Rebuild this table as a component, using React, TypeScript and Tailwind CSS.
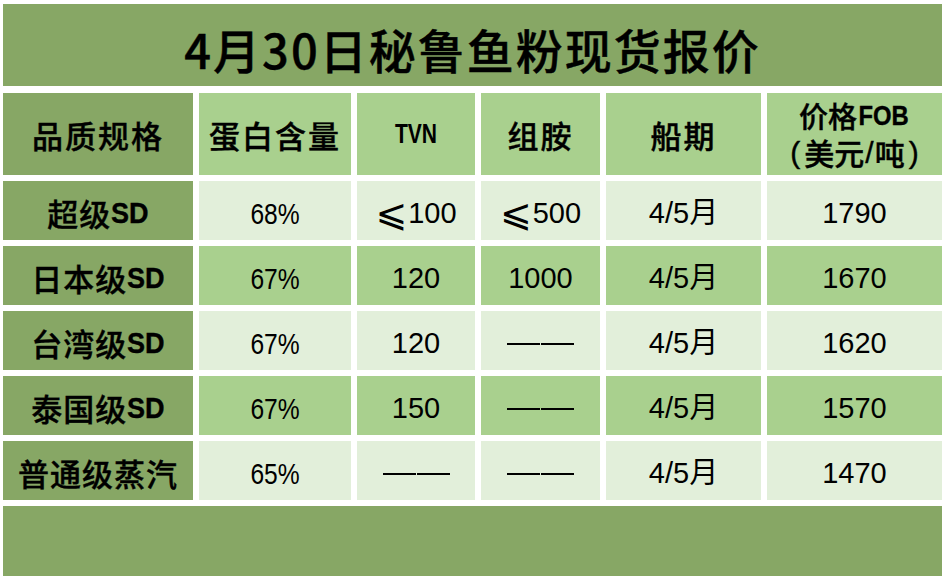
import React from "react";

const CJK = "font-['Noto_Sans_CJK_SC',sans-serif] [-webkit-text-stroke:0.4px_black]";
const ARIAL = "font-['Liberation_Sans','Noto_Sans_CJK_SC',sans-serif]";

const DARK = "bg-[#87a765]";
const MID = "bg-[#a9d08e]";
const LIGHT = "bg-[#e2efda]";

type Row = { name: string; protein: string; tvn: string; his: string; ship: string; price: string };

const rows: Row[] = [
  { name: "超级SD", protein: "68%", tvn: "⩽100", his: "⩽500", ship: "4/5月", price: "1790" },
  { name: "日本级SD", protein: "67%", tvn: "120", his: "1000", ship: "4/5月", price: "1670" },
  { name: "台湾级SD", protein: "67%", tvn: "120", his: "——", ship: "4/5月", price: "1620" },
  { name: "泰国级SD", protein: "67%", tvn: "150", his: "——", ship: "4/5月", price: "1570" },
  { name: "普通级蒸汽", protein: "65%", tvn: "——", his: "——", ship: "4/5月", price: "1470" },
];

function Val({ v }: { v: string }) {
  if (v === "——") {
    return (
      <span className="flex items-center gap-[1px]">
        <span className="block w-[33px] h-[2px] bg-black" />
        <span className="block w-[33px] h-[2px] bg-black" />
      </span>
    );
  }
  if (v.startsWith("⩽")) {
    return (
      <span className={`${ARIAL} text-[29px] text-black leading-none flex items-center`}>
        <span className="font-['DejaVu_Sans',sans-serif] text-[38px] leading-none mr-[1px] -mt-[2px]">⩽</span>
        {v.slice(1)}
      </span>
    );
  }
  return <span className={`${ARIAL} text-[29px] text-black leading-none`}>{v}</span>;
}

export default function App() {
  return (
    <div className="w-[945px] h-[580px] bg-white pt-[4px] px-[3px] flex flex-col">
      <div className={`${DARK} h-[82px] flex items-center justify-center pt-[6px]`}>
        <span className={`${CJK} font-medium text-[47px] text-black leading-none tracking-[2px]`}>
          4月30日秘鲁鱼粉现货报价
        </span>
      </div>
      <div className="mt-[7px] grid grid-cols-[190px_152px_118px_119px_155px_175px] gap-[6px] grid-rows-[82px_59px_59px_59px_59px_59px_70px]">
        <div className={`${DARK} flex items-center justify-center`}>
          <span className={`${CJK} font-medium text-[31px] tracking-[2px] leading-none`}>品质规格</span>
        </div>
        <div className={`${MID} flex items-center justify-center`}>
          <span className={`${CJK} font-medium text-[31px] tracking-[2px] leading-none`}>蛋白含量</span>
        </div>
        <div className={`${MID} flex items-center justify-center`}>
          <span className={`${ARIAL} font-bold text-[27px] leading-none inline-block scale-x-[0.78]`}>TVN</span>
        </div>
        <div className={`${MID} flex items-center justify-center`}>
          <span className={`${CJK} font-medium text-[31px] tracking-[2px] leading-none`}>组胺</span>
        </div>
        <div className={`${MID} flex items-center justify-center`}>
          <span className={`${CJK} font-medium text-[31px] tracking-[2px] leading-none`}>船期</span>
        </div>
        <div className={`${MID} flex flex-col items-center justify-center`}>
          <span className={`${CJK} font-medium text-[29px] leading-[37px] flex items-center`}>
            价格<span className={`${ARIAL} font-bold text-[28px] inline-block scale-x-[0.85] -mx-[3px]`}>FOB</span>
          </span>
          <span className={`${CJK} font-medium text-[30px] leading-[37px] flex items-center`}>
            <span className={`${ARIAL} mr-[4px]`}>(</span>美元<span className={`${ARIAL} mx-[1px]`}>/</span>吨<span className={`${ARIAL} ml-[4px]`}>)</span>
          </span>
        </div>
        {rows.map((r, i) => {
          const bg = i % 2 === 0 ? LIGHT : MID;
          const hasSD = r.name.includes("SD");
          return (
            <React.Fragment key={r.name}>
              <div className={`${DARK} flex items-center justify-center pt-[4px]`}>
                <span className={`${CJK} font-medium text-[31px] tracking-[1px] leading-none flex items-center`}>
                  {r.name.replace("SD", "")}
                  {hasSD && (
                    <span className={`${ARIAL} font-bold text-[30px] tracking-normal inline-block scale-x-[0.9] -ml-[2px] -mr-[2px]`}>
                      SD
                    </span>
                  )}
                </span>
              </div>
              <div className={`${bg} flex items-center justify-center pt-[6px]`}>
                <span className={`${ARIAL} text-[30px] leading-none inline-block scale-x-[0.82]`}>{r.protein}</span>
              </div>
              <div className={`${bg} flex items-center justify-center pt-[6px]`}>
                <Val v={r.tvn} />
              </div>
              <div className={`${bg} flex items-center justify-center pt-[6px]`}>
                <Val v={r.his} />
              </div>
              <div className={`${bg} flex items-center justify-center pt-[6px]`}>
                <span className={`${ARIAL} text-[29px] leading-none`}>{r.ship}</span>
              </div>
              <div className={`${bg} flex items-center justify-center pt-[6px]`}>
                <Val v={r.price} />
              </div>
            </React.Fragment>
          );
        })}
        <div className={`${DARK} col-span-6`} />
      </div>
    </div>
  );
}
